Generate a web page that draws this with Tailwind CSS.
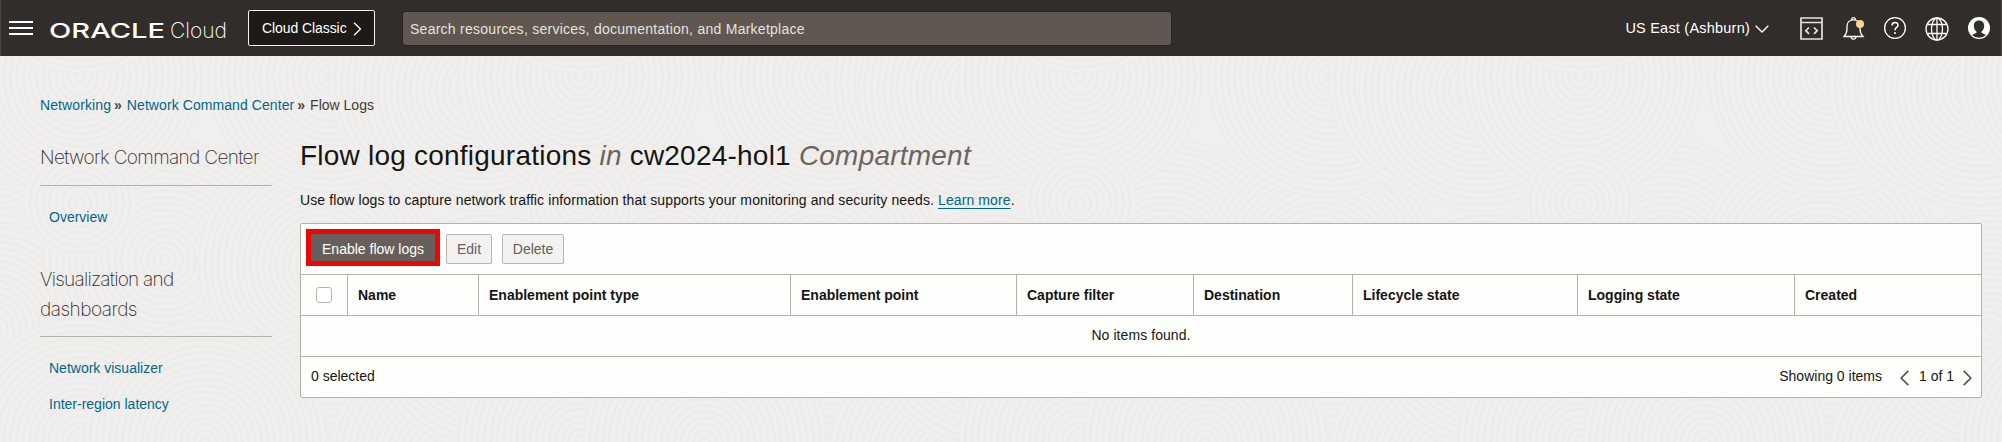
<!DOCTYPE html>
<html lang="en">
<head>
<meta charset="utf-8">
<title>Flow Logs | Oracle Cloud</title>
<script src="https://cdn.jsdelivr.net/npm/@tailwindcss/browser@4"></script>
</head>
<body class="relative isolate flex h-[442px] w-[2002px] flex-col overflow-hidden bg-[#f0efed] font-['Liberation_Sans',Arial,sans-serif] text-[14px] text-[#161513]">

<!-- Page texture: overlapping ringed discs -->
<svg class="absolute inset-0 -z-10" width="2002" height="442" aria-hidden="true">
  <defs>
    <radialGradient id="rings" gradientUnits="userSpaceOnUse" cx="0" cy="0" r="6.5" spreadMethod="repeat">
      <stop offset="0" stop-color="#f0efed"/><stop offset=".4" stop-color="#f0efed"/>
      <stop offset=".7" stop-color="#ebeae8"/><stop offset="1" stop-color="#f0efed"/>
    </radialGradient>
    <circle id="disc" r="122" fill="url(#rings)"/>
    <g id="tile">
      <use href="#disc" x="-10" y="330"/><use href="#disc" x="250" y="330"/><use href="#disc" x="410" y="340"/>
      <use href="#disc" x="165" y="260"/><use href="#disc" x="320" y="265"/>
      <use href="#disc" x="330" y="77"/><use href="#disc" x="450" y="82"/>
      <use href="#disc" x="-20" y="90"/><use href="#disc" x="80" y="77"/>
      <use href="#disc" x="80" y="-48"/><use href="#disc" x="80" y="440"/>
      <use href="#disc" x="330" y="440"/><use href="#disc" x="450" y="460"/><use href="#disc" x="205" y="442"/>
      <circle cx="0" cy="0" r="56" transform="translate(80 203)" fill="url(#rings)"/>
    </g>
  </defs>
  <use href="#tile"/><use href="#tile" x="500"/><use href="#tile" x="1000"/><use href="#tile" x="1500"/><use href="#tile" x="2000"/>
</svg>

<header class="flex h-14 shrink-0 items-center border-x border-[#4b4643] bg-[#312d2a] text-white">
  <svg class="ml-2 shrink-0" width="24" height="16" viewBox="0 0 24 16" stroke="#fff" stroke-width="2"><path d="M0 2h24M0 8h24M0 14h24"/></svg>
  <svg class="ml-4 shrink-0" width="180" height="32" viewBox="0 0 180 32" fill="#fff" font-family="Inter, sans-serif">
    <text x="0" y="25.500" font-size="20.5" font-weight="500" textLength="116" lengthAdjust="spacingAndGlyphs">ORACLE</text>
    <text x="121" y="25.500" font-size="21.5" font-weight="200" textLength="57" lengthAdjust="spacingAndGlyphs">Cloud</text>
  </svg>
  <button class="ml-[19px] flex h-9 w-[127px] shrink-0 items-center rounded-xs border border-[#f5f4f2] bg-[#1e1a17] pl-[13px]">
    <span class="w-[91px] text-left tracking-[-0.08px]">Cloud Classic</span>
    <svg class="mt-0.5" width="9" height="14" viewBox="0 0 9 14" fill="none" stroke="#fff" stroke-width="1.3"><path d="M1 .8l6.5 6.2L1 13.2"/></svg>
  </button>
  <div class="mt-px ml-7 flex h-[33px] w-[768px] shrink-0 items-center rounded-[3px] bg-[#5f5750] pt-px pl-[7px] tracking-[0.26px] text-[#e6e3df] shadow-[0_0_0_1px_#292522]">Search resources, services, documentation, and Marketplace</div>
  <div class="ml-auto flex items-center">
    <span class="mt-0.5 mr-[5px] text-[14.5px] tracking-[0.22px]">US East (Ashburn)</span>
    <svg class="mt-0.5" width="14" height="8" viewBox="0 0 14 8" fill="none" stroke="#fff" stroke-width="1.4"><path d="M.7.7L7 7 13.300.7"/></svg>
    <svg class="ml-[31px]" width="23" height="23" viewBox="0 0 23 23" fill="none" stroke="#e4e3e1" stroke-width="1.7"><path d="M1 1h21v21H1zM1 5.500h21" /><path d="M9 10.500L5.800 13.700 9 16.900M14 10.500l3.200 3.200L14 16.900"/></svg>
    <svg class="ml-5" width="22" height="24" viewBox="0 0 22 24" fill="none" stroke="#fff" stroke-width="1.3"><path d="M1 20.500c2-2 3-4 3-7.500V10c0-3.500 2.500-6.200 6.500-6.200S17 6.500 17 10v3c0 3.500 1 5.500 3 7.500zM8.700 3.800c-.3-3 3.900-3 3.600 0M8 20.800c.2 3 4.800 3 5 0"/><circle cx="17" cy="8" r="4" fill="#f9d78f" stroke="none"/></svg>
    <svg class="ml-[18px]" width="24" height="24" viewBox="0 0 24 24" fill="none" stroke="#fff" stroke-width="1.3"><circle cx="12" cy="12" r="10.400"/><path d="M9 9.500c0-4 6-4 6-.5 0 2.500-3 2.300-3 5.200" stroke-width="1.500"/><circle cx="12" cy="16.900" r="1" fill="#fff" stroke="none"/></svg>
    <svg class="mt-px ml-[18px]" width="24" height="24" viewBox="0 0 24 24" fill="none" stroke="#fff" stroke-width="1.300"><circle cx="12" cy="12" r="11"/><ellipse cx="12" cy="12" rx="5.500" ry="11"/><path d="M12 1v22M2.500 7.500h19M2.500 16.500h19"/></svg>
    <svg class="mr-[10px] ml-[18px]" width="24" height="24" viewBox="0 0 24 24"><circle cx="12" cy="12" r="11" fill="#fff"/><path d="M12 4.500c3.500 0 5.200 2.300 5.200 5.300 0 2.500-1 4.500-2.700 5.700v1.200l4.500 2.300A10 10 0 0 1 5 19l4.500-2.300v-1.200c-1.700-1.200-2.700-3.200-2.700-5.700 0-3 1.700-5.300 5.200-5.300z" fill="#312d2a"/></svg>
  </div>
</header>

<nav class="mt-[39px] ml-10 flex h-5 shrink-0 items-center leading-5 text-[#00688c]">
  <a class="tracking-[0.1px]">Networking</a><span class="mr-[5px] ml-[3px] font-bold text-[#4b4643]">»</span>
  <a class="tracking-[0.08px]">Network Command Center</a><span class="mr-[5px] ml-[3px] font-bold text-[#4b4643]">»</span>
  <span class="text-[#403c38]">Flow Logs</span>
</nav>

<div class="flex">
  <aside class="ml-10 w-[232px] shrink-0 pt-[27px]">
    <h2 class="h-[44px] border-b border-[#b5b1ab] pt-px font-['Inter',sans-serif] text-[19px] leading-[30px] font-extralight tracking-[-0.65px] text-[#312d2a]">Network Command Center</h2>
    <a class="mt-[21px] ml-[9px] block leading-5 text-[#00688c]">Overview</a>
    <h2 class="mt-[37px] h-[73px] border-b border-[#b5b1ab] pt-px font-['Inter',sans-serif] text-[19px] leading-[30px] font-extralight tracking-[-0.5px] text-[#312d2a]"><span class="tracking-[-0.75px]">Visualization and</span><br>dashboards</h2>
    <a class="mt-[21px] ml-[9px] block leading-5 text-[#00688c]">Network visualizer</a>
    <a class="mt-4 ml-[9px] block leading-5 text-[#00688c]">Inter-region latency</a>
  </aside>

  <main class="ml-7 w-[1682px] shrink-0">
    <h1 class="mt-5 h-[44px] pt-px text-[28px] leading-[40px] tracking-[0.22px] whitespace-nowrap text-[#161513]">Flow log configurations <i class="text-[#6b6460]">in</i> cw2024-hol1 <i class="text-[#6b6460]">Compartment</i></h1>
    <p class="mt-[11px] leading-5 tracking-[0.1px]">Use flow logs to capture network traffic information that supports your monitoring and security needs. <a class="text-[#00688c] underline underline-offset-[3px]">Learn more</a>.</p>

    <section class="mt-[13px] flex h-[175px] flex-col rounded-xs border border-[#b5b1ab] bg-[#fefefc]">
      <div class="flex h-[50px] items-start gap-[6px] pl-[5px]">
        <button class="mt-[5px] flex h-[37px] w-[134px] items-center justify-center border-5 border-[#ec0606] bg-[#665f5b] pt-[3px] text-white">Enable flow logs</button>
        <button class="mt-[10px] h-[30px] w-[46px] rounded-xs border border-[#b9b5b0] bg-[#f3f2f0] text-[#665f5b]">Edit</button>
        <button class="mt-[10px] ml-1 h-[30px] w-[62px] rounded-xs border border-[#b9b5b0] bg-[#f3f2f0] text-[#665f5b]">Delete</button>
      </div>
      <div class="grid h-[42px] grid-cols-[46px_131px_312px_226px_177px_159px_225px_217px_1fr] items-stretch border-y border-[#b5b1ab] leading-10 font-bold">
        <div class="flex items-center pl-[15px]"><span class="size-4 rounded-[3px] border border-[#b5b1ab] bg-white"></span></div>
        <div class="border-l border-[#b5b1ab] pl-[10px]">Name</div>
        <div class="border-l border-[#b5b1ab] pl-[10px]">Enablement point type</div>
        <div class="border-l border-[#b5b1ab] pl-[10px]">Enablement point</div>
        <div class="border-l border-[#b5b1ab] pl-[10px]">Capture filter</div>
        <div class="border-l border-[#b5b1ab] pl-[10px]">Destination</div>
        <div class="border-l border-[#b5b1ab] pl-[10px]">Lifecycle state</div>
        <div class="border-l border-[#b5b1ab] pl-[10px]">Logging state</div>
        <div class="border-l border-[#b5b1ab] pl-[10px]">Created</div>
      </div>
      <div class="h-[41px] border-b border-[#b5b1ab] text-center leading-[39px] tracking-[0.07px]">No items found.</div>
      <div class="flex h-10 items-center pr-[9px] pl-[10px] leading-[38px]">
        <span class="-mt-0.5">0 selected</span>
        <span class="-mt-0.5 ml-auto">Showing 0 items</span>
        <svg class="mt-px ml-[18px]" width="9" height="16" viewBox="0 0 9 16" fill="none" stroke="#5b5450" stroke-width="1.700"><path d="M8.300.8L1.200 8l7.100 7.200"/></svg>
        <span class="-mt-0.5 mr-[9px] ml-[10px]">1 of 1</span>
        <svg class="mt-px" width="9" height="16" viewBox="0 0 9 16" fill="none" stroke="#5b5450" stroke-width="1.700"><path d="M.7.8L7.800 8 .7 15.200"/></svg>
      </div>
    </section>
  </main>
</div>
</body>
</html>
